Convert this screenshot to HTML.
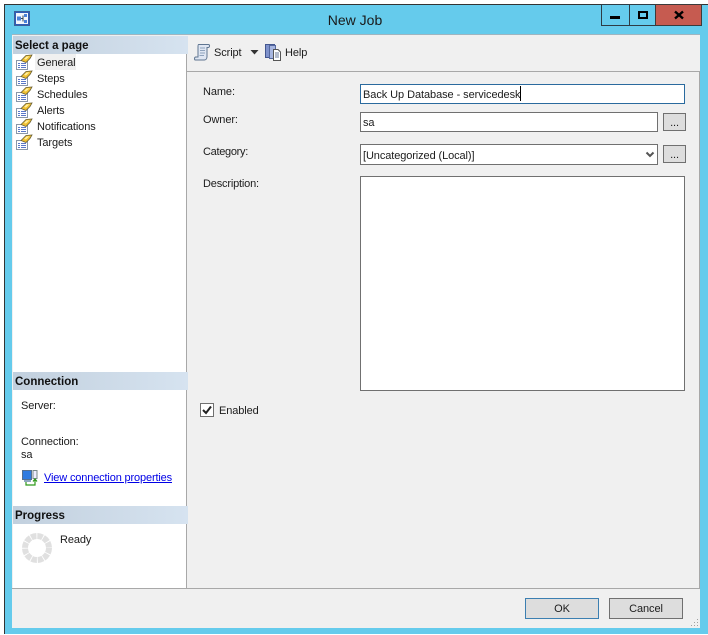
<!DOCTYPE html>
<html><head><meta charset="utf-8"><style>
html,body{margin:0;padding:0;background:#fff}
body{width:708px;height:635px;position:relative;overflow:hidden;font-family:"Liberation Sans",sans-serif;font-size:11px;letter-spacing:-.1px;color:#1c1c1c}
.a{position:absolute;box-sizing:border-box}
.t{position:absolute;white-space:nowrap;line-height:14px;height:14px;margin-top:1px}
.h{position:absolute;left:13px;width:173px;height:18px;background:linear-gradient(90deg,#c2d0de,#d6e3f0);font-weight:bold;font-size:11.5px;letter-spacing:0;line-height:20px;padding-left:2px;color:#111}
.in{position:absolute;box-sizing:border-box;background:#fff;border:1px solid #707070}
.b{position:absolute;box-sizing:border-box;background:#ddd;border:1px solid #707070;text-align:center}
svg{position:absolute;overflow:visible}
</style></head><body>
<svg width="0" height="0" style="position:absolute"><defs>
<g id="pg">
<path d="M.5 6.5H11.5V15.5H.5Z" fill="#fff" stroke="#8a97a8"/>
<path d="M2 9.5H4M5 9.5H10M2 11.5H4M5 11.5H10M2 13.5H4M5 13.5H10" stroke="#5a78c8"/>
<path d="M5 6.5L10 1.5L16 1L14 4.5L10 8.5Z" fill="#f0c030" stroke="#6a6035" stroke-width=".8"/>
<path d="M8 5L10.5 2.5L13.5 2.2L10 5.5Z" fill="#fff0a0"/>
</g></defs></svg>

<div class="a" style="left:4px;top:4px;width:704px;height:631px;background:#65cbec;border-left:1px solid #333;border-top:1px solid #333"></div>
<div class="a" style="left:0;top:634px;width:708px;height:1px;background:#fff"></div>

<!-- title -->
<svg style="left:14px;top:11px" width="16" height="15"><rect x=".5" y=".5" width="15" height="14" fill="#2f5db8" stroke="#3a5f9a"/><rect x="2" y="2" width="12" height="11" fill="#f4f7fc"/><rect x="3" y="5.5" width="4" height="4" fill="#4a82d8"/><rect x="10" y="3" width="3" height="3" fill="#4a82d8"/><rect x="10" y="9" width="3" height="3" fill="#4a82d8"/><path d="M7 7.5H9M9 4.5V10.5" stroke="#345" fill="none"/></svg>
<div class="t" style="left:300px;width:110px;text-align:center;top:12px;margin-top:0;font-size:14px;letter-spacing:0;line-height:16px;height:16px;color:#1a1a1a">New Job</div>
<div class="a" style="left:601px;top:4px;width:29px;height:22px;background:#65cbec;border:1px solid #2e3b44"></div>
<div class="a" style="left:629px;top:4px;width:27px;height:22px;background:#65cbec;border:1px solid #2e3b44"></div>
<div class="a" style="left:655px;top:4px;width:47px;height:22px;background:#c65b50;border:1px solid #3b3b3b"></div>
<div class="a" style="left:610px;top:16px;width:10px;height:3px;background:#000"></div>
<div class="a" style="left:638px;top:11px;width:10px;height:8px;border:2px solid #000"></div>
<svg style="left:674px;top:11px" width="10" height="8"><path d="M1 .5L9 7.5M9 .5L1 7.5" stroke="#000" stroke-width="2.4" fill="none"/></svg>

<!-- client -->
<div class="a" style="left:12px;top:34px;width:688px;height:2px;background:#9fb5c0"></div>
<div class="a" style="left:12px;top:35px;width:688px;height:593px;background:#f0f0f0"></div>
<div class="a" style="left:13px;top:36px;width:173px;height:552px;background:#fff"></div>
<div class="a" style="left:186px;top:36px;width:1px;height:552px;background:#a8a8a8"></div>
<div class="a" style="left:699px;top:71px;width:1px;height:517px;background:#a8a8a8"></div>
<div class="a" style="left:187px;top:71px;width:513px;height:1px;background:#a8a8a8"></div>
<div class="a" style="left:12px;top:588px;width:688px;height:1px;background:#a8a8a8"></div>

<!-- left list -->
<div class="h" style="top:36px">Select a page</div>
<div class="a" style="left:35px;top:54px;width:41px;height:16px;background:#f0f0f0"></div>
<svg style="left:16px;top:54px" width="16" height="16"><use href="#pg"/></svg>
<svg style="left:16px;top:70px" width="16" height="16"><use href="#pg"/></svg>
<svg style="left:16px;top:86px" width="16" height="16"><use href="#pg"/></svg>
<svg style="left:16px;top:102px" width="16" height="16"><use href="#pg"/></svg>
<svg style="left:16px;top:118px" width="16" height="16"><use href="#pg"/></svg>
<svg style="left:16px;top:134px" width="16" height="16"><use href="#pg"/></svg>
<div class="t" style="left:37px;top:55px">General</div>
<div class="t" style="left:37px;top:71px">Steps</div>
<div class="t" style="left:37px;top:87px">Schedules</div>
<div class="t" style="left:37px;top:103px">Alerts</div>
<div class="t" style="left:37px;top:119px">Notifications</div>
<div class="t" style="left:37px;top:135px">Targets</div>

<div class="h" style="top:372px">Connection</div>
<div class="t" style="left:21px;top:398px">Server:</div>
<div class="t" style="left:21px;top:434px">Connection:</div>
<div class="t" style="left:21px;top:447px">sa</div>
<svg style="left:22px;top:470px" width="16" height="16"><rect x=".5" y=".5" width="9" height="9" fill="#2f7be0" stroke="#55708f"/><rect x="2" y="10" width="7" height="2" fill="#8fa6c0"/><rect x="11" y=".5" width="4" height="8" fill="#eef" stroke="#7a8a8a"/><path d="M4 12V15H13V10M11 11.5L13 9L15 11.5" fill="none" stroke="#2f9a1a" stroke-width="1.2"/></svg>
<div class="t" style="left:44px;top:470px;color:#0000e6;text-decoration:underline;letter-spacing:-.15px">View connection properties</div>

<div class="h" style="top:506px">Progress</div>
<svg style="left:22px;top:533px" width="30" height="30"><circle cx="15" cy="15" r="12" fill="none" stroke="#e0e0e0" stroke-width="6" stroke-dasharray="5.4 .88"/></svg>
<div class="t" style="left:60px;top:532px">Ready</div>

<!-- toolbar -->
<svg style="left:194px;top:44px" width="17" height="17"><path d="M4.5 .5H14.5C15.8 .5 16 3 14.5 3.5H13V12.5C13 14.5 12 16 10.5 16H1.5C.2 16 .2 13.5 1.5 13H4V3C4 1.5 4 .5 4.5 .5Z" fill="#dfe6f2" stroke="#5f7590"/><path d="M6 4H11M6 6.5H11M6 9H11M5.5 11.5H10" stroke="#8ea2bc"/></svg>
<div class="t" style="left:214px;top:45px">Script</div>
<svg style="left:250px;top:50px" width="9" height="5"><path d="M.5 0H8.5L4.5 4.5Z" fill="#333"/></svg>
<svg style="left:265px;top:44px" width="17" height="17"><rect x=".5" y=".5" width="9" height="13" fill="#7f92cc" stroke="#44578f"/><rect x="4.5" y="1.5" width="6" height="13" fill="#a7b6e0" stroke="#55689f"/><path d="M8.5 5.5H13L15.5 8V16.5H8.5Z" fill="#fff" stroke="#555"/><path d="M10 9H14M10 11H14M10 13H14" stroke="#6a7a9a"/></svg>
<div class="t" style="left:285px;top:45px">Help</div>

<!-- form -->
<div class="t" style="left:203px;top:84px">Name:</div>
<div class="t" style="left:203px;top:112px">Owner:</div>
<div class="t" style="left:203px;top:144px;letter-spacing:-.3px">Category:</div>
<div class="t" style="left:203px;top:176px;letter-spacing:-.18px">Description:</div>

<div class="in" style="left:360px;top:84px;width:325px;height:20px;border-color:#2a6a9e"></div>
<div class="t" style="left:363px;top:87px;letter-spacing:-.07px">Back Up Database - servicedesk</div>
<div class="a" style="left:520px;top:86px;width:1px;height:15px;background:#000"></div>

<div class="in" style="left:360px;top:112px;width:298px;height:20px"></div>
<div class="t" style="left:363px;top:115px">sa</div>
<div class="b" style="left:663px;top:113px;width:23px;height:18px;line-height:18px">...</div>

<div class="in" style="left:360px;top:144px;width:298px;height:21px"></div>
<div class="t" style="left:363px;top:148px">[Uncategorized (Local)]</div>
<svg style="left:646px;top:152px" width="8" height="6"><path d="M.5 .5L4 4L7.5 .5" fill="none" stroke="#555" stroke-width="2"/></svg>
<div class="b" style="left:663px;top:145px;width:23px;height:18px;line-height:18px">...</div>

<div class="in" style="left:360px;top:176px;width:325px;height:215px"></div>

<div class="a" style="left:200px;top:403px;width:14px;height:14px;background:#fff;border:1px solid #707070"></div>
<svg style="left:202px;top:405px" width="10" height="10"><path d="M1 5L4 8L9 1.5" fill="none" stroke="#222" stroke-width="2"/></svg>
<div class="t" style="left:219px;top:403px">Enabled</div>

<!-- footer -->
<div class="b" style="left:525px;top:598px;width:74px;height:21px;line-height:21px;border-color:#3c7fb1">OK</div>
<div class="b" style="left:609px;top:598px;width:74px;height:21px;line-height:21px">Cancel</div>
<svg style="left:691px;top:619px" width="8" height="8"><path d="M6 0h1v1H6zM6 3h1v1H6zM3 3h1v1H3zM6 6h1v1H6zM3 6h1v1H3zM0 6h1v1H0z" fill="#a0a0a0"/></svg>
</body></html>
